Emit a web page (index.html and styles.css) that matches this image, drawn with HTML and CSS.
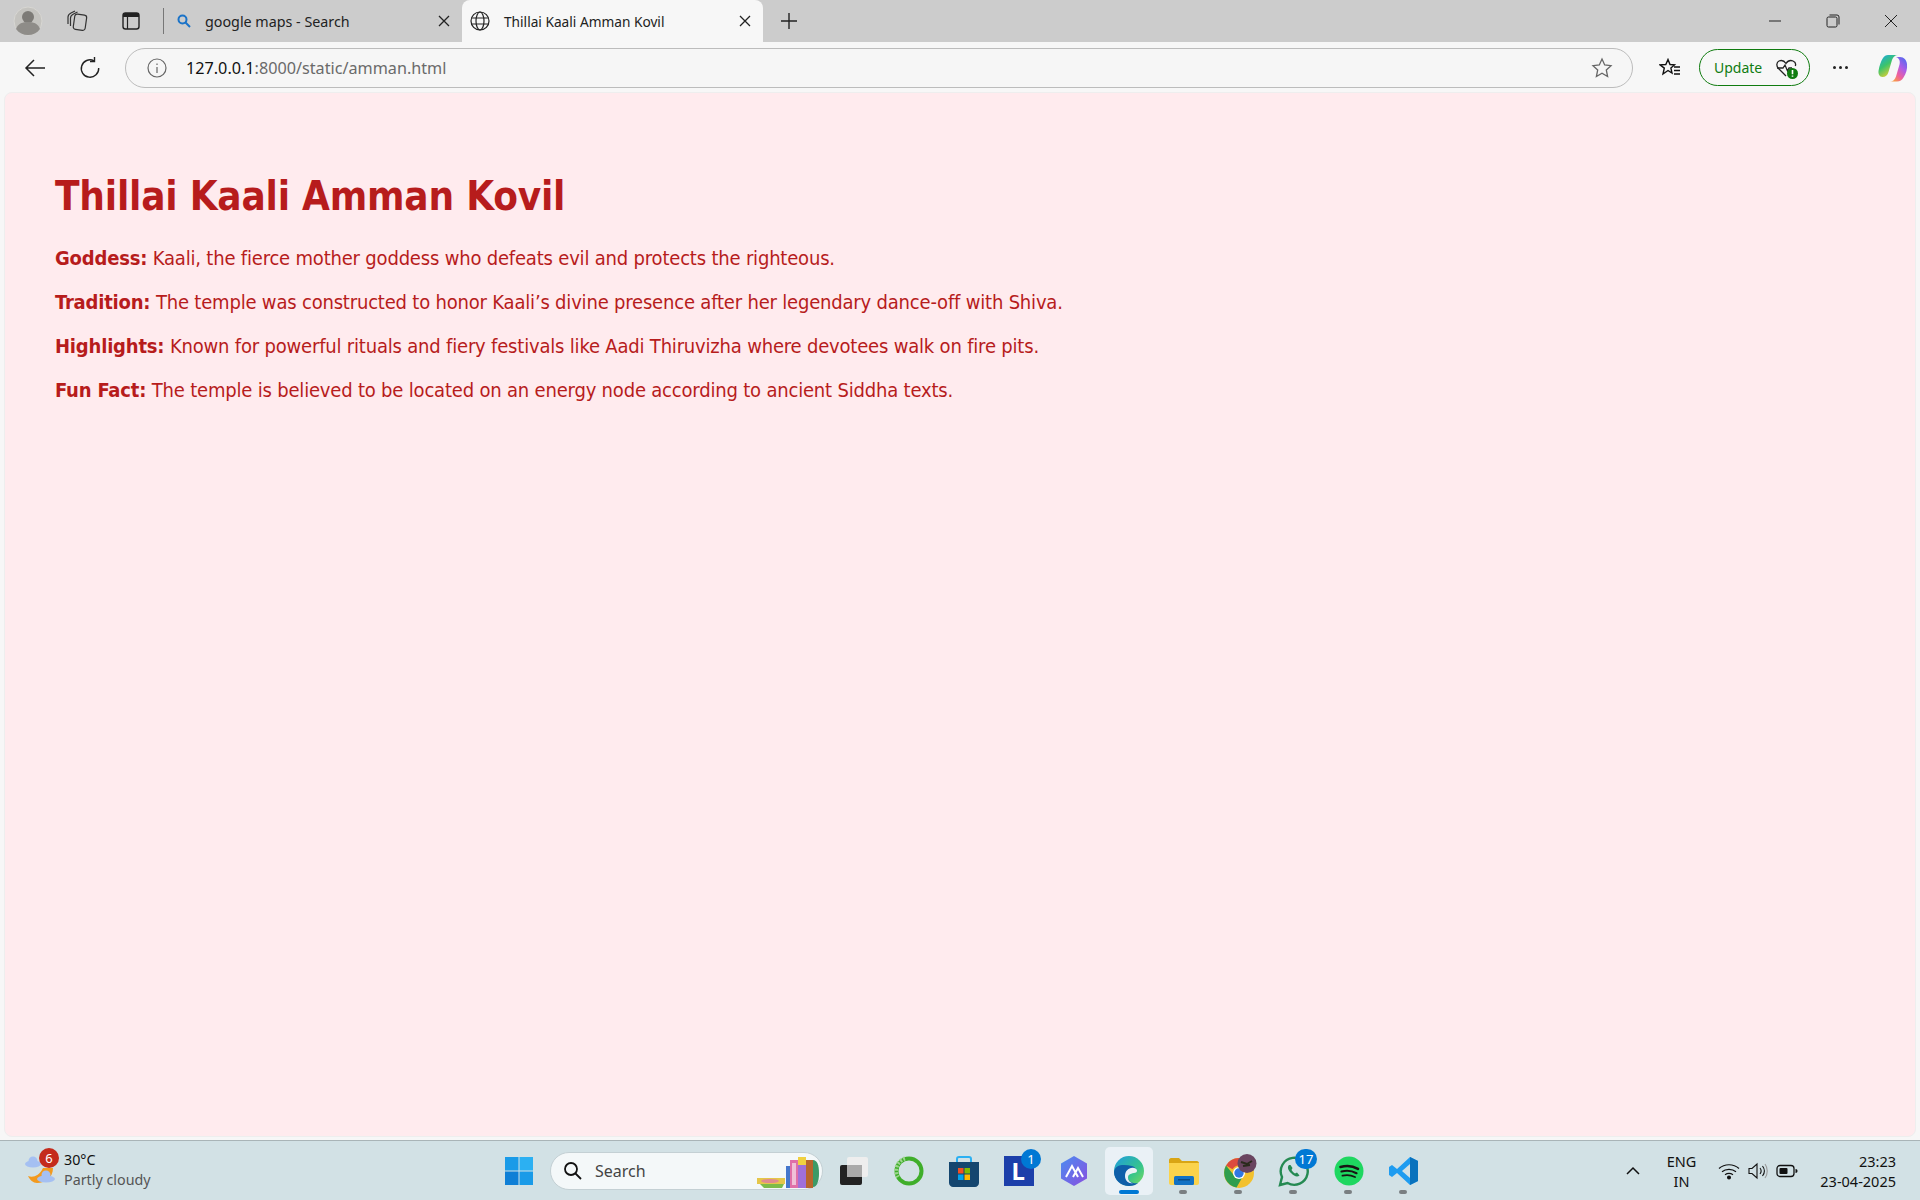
FILE: index.html
```html
<!DOCTYPE html>
<html lang="en">
<head>
    <meta charset="UTF-8">
    <meta name="viewport" content="width=device-width, initial-scale=1.0">
    <title>Thillai Kaali Amman Kovil</title>
    <link rel="stylesheet" href="styles.css">
</head>
<body>

<div class="tabstrip">
    <div class="strip-left">
        <div class="avatar">
            <svg width="42" height="42" viewBox="0 0 42 42"><circle cx="21" cy="21" r="14" fill="#c4c3bf" stroke="#d8d7d3" stroke-width="1"/><circle cx="21" cy="17" r="6" fill="#7d7b77"/><path d="M9 29c2-6 7-7 12-7s10 1 12 7c-3 4-7 6-12 6s-9-2-12-6z" fill="#8e8c88"/></svg>
        </div>
        <div class="strip-btn">
            <svg width="22" height="22" viewBox="0 0 22 22" fill="none" stroke="#333" stroke-width="1.2"><path d="M2 14V7c0-2 1-3 3-4l4-2"/><path d="M4.500 16V8c0-2 1-3 3-4l4-2"/><rect x="8" y="4.500" width="12" height="15.500" rx="2.500" transform="rotate(8 14 12)"/></svg>
        </div>
        <div class="strip-btn">
            <svg width="20" height="20" viewBox="0 0 20 20"><rect x="2" y="2" width="16" height="16" rx="2.500" fill="none" stroke="#222" stroke-width="1.400"/><path d="M2 4.500a2.500 2.500 0 0 1 2.500-2.500h11a2.500 2.500 0 0 1 2.500 2.500V6H2z" fill="#222"/><path d="M6.500 6v12" stroke="#222" stroke-width="1.200"/></svg>
        </div>
        <div class="strip-sep"></div>
    </div>
    <div class="tab">
        <svg width="16" height="16" viewBox="0 0 16 16" fill="none" stroke="#1a73c8" stroke-width="2"><circle cx="6.500" cy="6.500" r="4"/><path d="M9.500 9.500l4.500 4.500"/></svg>
        <span class="tab-title">google maps - Search</span>
        <svg class="tab-close" width="12" height="12" viewBox="0 0 12 12" stroke="#222" stroke-width="1.300"><path d="M1 1l10 10M11 1L1 11"/></svg>
    </div>
    <div class="tab tab-active">
        <svg width="22" height="22" viewBox="0 0 22 22" fill="none" stroke="#222" stroke-width="1.200"><circle cx="11" cy="11" r="9"/><ellipse cx="11" cy="11" rx="4" ry="9"/><path d="M2.500 8h17M2.500 14h17"/></svg>
        <span class="tab-title">Thillai Kaali Amman Kovil</span>
        <svg class="tab-close" width="12" height="12" viewBox="0 0 12 12" stroke="#222" stroke-width="1.300"><path d="M1 1l10 10M11 1L1 11"/></svg>
    </div>
    <div class="new-tab">
        <svg width="18" height="18" viewBox="0 0 18 18" stroke="#222" stroke-width="1.400"><path d="M9 1v16M1 9h16"/></svg>
    </div>
    <div class="win-controls">
        <svg width="14" height="14" viewBox="0 0 14 14" stroke="#222" stroke-width="1"><path d="M1 7h12"/></svg>
        <svg width="14" height="14" viewBox="0 0 14 14" fill="none" stroke="#222" stroke-width="1"><rect x="1" y="3" width="10" height="10" rx="1.500"/><path d="M3.500 1h7.500a2 2 0 0 1 2 2v7.500"/></svg>
        <svg width="14" height="14" viewBox="0 0 14 14" stroke="#222" stroke-width="1"><path d="M1 1l12 12M13 1L1 13"/></svg>
    </div>
</div>

<div class="toolbar">
    <div class="tool-btn">
        <svg width="22" height="20" viewBox="0 0 22 20" fill="none" stroke="#222" stroke-width="1.500"><path d="M21 10H2M10 2l-8 8 8 8"/></svg>
    </div>
    <div class="tool-btn">
        <svg width="22" height="22" viewBox="0 0 22 22" fill="none" stroke="#222" stroke-width="1.400"><path d="M15 3.800A8.700 8.700 0 1 0 19.700 11"/><path d="M15.500 0v4.500H11"/></svg>
    </div>
    <div class="address">
        <svg width="20" height="20" viewBox="0 0 20 20" fill="none" stroke="#666" stroke-width="1.200"><circle cx="10" cy="10" r="9"/><path d="M10 9v6M10 5.500v1.500"/></svg>
        <span class="url"><span class="url-host">127.0.0.1</span>:8000/static/amman.html</span>
        <svg class="star" width="22" height="22" viewBox="0 0 22 22" fill="none" stroke="#666" stroke-width="1.300"><path d="M11 2l2.700 6 6.300.7-4.700 4.300 1.300 6.500-5.600-3.300-5.600 3.300 1.300-6.500L2 8.700 8.300 8z"/></svg>
    </div>
    <div class="tool-btn fav-btn">
        <svg width="22" height="20" viewBox="0 0 22 20" fill="none" stroke="#111" stroke-width="1.400"><path d="M9 1.500l2 5 4.500.4-3.600 3.200 1.100 5-4-2.600-5 3.500 1.300-5.900L1 6.900 6.800 6.500z"/><path d="M15 9h6M15 12.500h6M15 16h6"/></svg>
    </div>
    <div class="update-pill">
        <span>Update</span>
        <svg width="24" height="24" viewBox="0 0 24 24" fill="none"><path d="M11 20L3.500 12.500C1 10 1.500 6 4 5c3-1.200 5.500.2 7 2.500C12.500 5.200 15 3.800 18 5c2 .8 3 3 2.300 5" stroke="#222" stroke-width="1.300"/><path d="M2 12h6l2-3 2.500 6 1.500-3h3" stroke="#222" stroke-width="1.300"/><circle cx="17.500" cy="17.500" r="5.500" fill="#107c10"/><path d="M17.500 14v4.200M17.500 19.500v1.200" stroke="#fff" stroke-width="1.600"/></svg>
    </div>
    <div class="tool-btn dots">
        <span></span><span></span><span></span>
    </div>
    <div class="copilot">
        <svg width="30" height="30" viewBox="0 0 30 30"><defs><linearGradient id="copA" x1="0" y1="0" x2=".6" y2="1"><stop offset="0" stop-color="#19a7ee"/><stop offset=".5" stop-color="#3cc46a"/><stop offset="1" stop-color="#f5d02c"/></linearGradient><linearGradient id="copB" x1="1" y1="0" x2=".3" y2="1"><stop offset="0" stop-color="#3f6cf0"/><stop offset=".45" stop-color="#b05ce6"/><stop offset=".75" stop-color="#f0609a"/><stop offset="1" stop-color="#f79a4a"/></linearGradient></defs><path d="M22 4c4 0 6.500 3 7 7 .6 5-1 10-3.500 13.500C24 27 22 28.500 19 28.500h-7c3 0 5-2 6-5l3.500-12C22.500 8 21 5 18 4z" fill="url(#copB)"/><path d="M10 2h10c-3 0-5 2-6 5l-3.500 12c-1 3.500-3 5-6 5C1.500 24 0 21 .6 17.500 1.300 13 3 8 5 5c1.300-2 3-3 5-3z" fill="url(#copA)"/></svg>
    </div>
</div>

<div class="viewport">
    <main class="page">
        <h1>Thillai Kaali Amman Kovil</h1>
        <p><strong>Goddess:</strong> Kaali, the fierce mother goddess who defeats evil and protects the righteous.</p>
        <p><strong>Tradition:</strong> The temple was constructed to honor Kaali’s divine presence after her legendary dance-off with Shiva.</p>
        <p><strong>Highlights:</strong> Known for powerful rituals and fiery festivals like Aadi Thiruvizha where devotees walk on fire pits.</p>
        <p><strong>Fun Fact:</strong> The temple is believed to be located on an energy node according to ancient Siddha texts.</p>
    </main>
</div>

<footer class="taskbar">
    <div class="weather">
        <div class="weather-icon">
            <svg width="32" height="34" viewBox="0 0 32 34"><path d="M3 22c5 2 11 0 15-8h10c0 10-8 15-16 15-4 0-7-3-9-7z" fill="#f39a1e"/><ellipse cx="8" cy="10" rx="8" ry="3.500" fill="#a5c0f2"/><circle cx="8" cy="7" r="4.500" fill="#a5c0f2"/><ellipse cx="21" cy="25" rx="9" ry="3.500" fill="#a5c0f2"/><circle cx="21" cy="21" r="4.500" fill="#a5c0f2"/></svg>
            <span class="weather-badge">6</span>
        </div>
        <div class="weather-text">
            <span class="temp">30°C</span>
            <span class="cond">Partly cloudy</span>
        </div>
    </div>

    <div class="task-center">
        <div class="task-icon">
            <svg width="30" height="30" viewBox="0 0 30 30"><path d="M1 1h13.500v13.500H1z" fill="#1a9be8"/><path d="M15.500 1H29v13.500H15.500z" fill="#2cb0f2"/><path d="M1 15.500h13.500V29H1z" fill="#0f7fd6"/><path d="M15.500 15.500H29V29H15.500z" fill="#1a9be8"/></svg>
        </div>
        <div class="task-search">
            <svg width="20" height="20" viewBox="0 0 20 20" fill="none" stroke="#111" stroke-width="1.800"><circle cx="8" cy="8" r="6"/><path d="M12.500 12.500L18 18"/></svg>
            <span>Search</span>
            <svg class="books" width="66" height="36" viewBox="0 0 66 36"><path d="M2 25h28v6H2z" fill="#e5c64a"/><ellipse cx="15" cy="28" rx="9" ry="2" fill="#e08a90"/><path d="M5 31h24l-2 4H9z" fill="#7dbb4a"/><rect x="31" y="13" width="4" height="22" fill="#4477cc"/><rect x="35" y="7" width="8" height="28" fill="#e06fa8"/><rect x="37" y="10" width="4" height="22" fill="#f0c0d8"/><rect x="43" y="4" width="8" height="31" fill="#a06fd8"/><rect x="43" y="4" width="8" height="8" fill="#f0d040"/><rect x="51" y="7" width="7" height="28" fill="#b8652c"/><path d="M58 7c4 0 6 5 6 13s-2 14-6 14z" fill="#3d9a66"/></svg>
        </div>
        <div class="task-icon">
            <svg width="30" height="30" viewBox="0 0 30 30"><rect x="1" y="9" width="22" height="20" rx="2" fill="#222"/><rect x="8" y="1" width="21" height="20" rx="2" fill="#eee"/><rect x="8" y="9" width="15" height="12" fill="#aaa"/></svg>
        </div>
        <div class="task-icon">
            <svg width="32" height="32" viewBox="0 0 32 32" fill="none"><circle cx="16" cy="16" r="12.500" stroke="#3fae2a" stroke-width="4"/><path d="M12 3.500A12.500 12.500 0 0 0 5 22" stroke="#9ed48f" stroke-width="4" stroke-dasharray="2 1.500"/></svg>
        </div>
        <div class="task-icon">
            <svg width="30" height="32" viewBox="0 0 30 32"><path d="M8 8V4c0-1 1-2 2-2h10c1 0 2 1 2 2v4" fill="none" stroke="#2cb0f2" stroke-width="2"/><path d="M0 7h30v21c0 2-2 4-4 4H4c-2 0-4-2-4-4z" fill="#14466f"/><rect x="9" y="13" width="5.500" height="5.500" fill="#f25022"/><rect x="15.500" y="13" width="5.500" height="5.500" fill="#7fba00"/><rect x="9" y="19.500" width="5.500" height="5.500" fill="#00a4ef"/><rect x="15.500" y="19.500" width="5.500" height="5.500" fill="#ffb900"/></svg>
        </div>
        <div class="task-icon">
            <div class="l-tile">L</div>
            <span class="task-badge">1</span>
        </div>
        <div class="task-icon">
            <svg width="30" height="32" viewBox="0 0 30 32"><defs><linearGradient id="lensG" x1="0" y1="0" x2="1" y2="1"><stop offset="0" stop-color="#4a8cf0"/><stop offset="1" stop-color="#8a4fe0"/></linearGradient></defs><path d="M15 1l13 7.500v15L15 31 2 23.500v-15z" fill="url(#lensG)"/><path d="M7 22l6-11 6 11M14 22l5-9 5 9" fill="none" stroke="#fff" stroke-width="2"/></svg>
        </div>
        <div class="task-icon task-active">
            <svg width="32" height="32" viewBox="0 0 32 32"><defs><linearGradient id="edgeG" x1="0" y1="0" x2="1" y2="1"><stop offset="0" stop-color="#1f9be0"/><stop offset=".6" stop-color="#35c48d"/><stop offset="1" stop-color="#7ddc5b"/></linearGradient></defs><circle cx="16" cy="16" r="15" fill="url(#edgeG)"/><path d="M1 17c0 8 7 14 15 14 4 0 7-1 9-3-5 1-10-1-10-6 0-3 3-5 6-5 3-1 2-5-2-6C11 9 2 9 1 17z" fill="#0f5fa9"/><path d="M12 21c0-5 4-9 9-8 3 .6 4 3 2 4.500-2 1-8 .5-8 5 0 3 2 5 5 6-5 0-8-3-8-7.500z" fill="#eaf1f6"/></svg>
            <span class="active-bar"></span>
        </div>
        <div class="task-icon">
            <svg width="32" height="28" viewBox="0 0 32 28"><path d="M1 3c0-1 1-2 2-2h8l3 3h15c1 0 2 1 2 2v3H1z" fill="#d9a514"/><path d="M1 6h30v20c0 1-1 2-2 2H3c-1 0-2-1-2-2z" fill="#fbd34b"/><rect x="6" y="19" width="20" height="9" rx="1.500" fill="#1272c4"/><rect x="10" y="22" width="12" height="1.500" fill="#0b4c86"/></svg>
            <span class="run-dot"></span>
        </div>
        <div class="task-icon">
            <svg width="36" height="34" viewBox="-3 0 36 34"><circle cx="15" cy="19" r="15" fill="#f2c12e"/><path d="M15 4a15 15 0 0 1 13 7.500H15a7.500 7.500 0 0 0-6.500 3.800L2 11.500A15 15 0 0 1 15 4z" fill="#dd4b3e"/><path d="M2 11.500a15 15 0 0 0 10.500 22l6-10.500a7.500 7.500 0 0 1-10-3.500z" fill="#2f9e4f"/><circle cx="15" cy="19" r="6" fill="#fff"/><circle cx="15" cy="19" r="4.700" fill="#2f78e4"/><circle cx="23" cy="9.500" r="9.500" fill="#6a4560"/><path d="M17 8l6 2 5-3M19 12l7-1" stroke="#2a2a1c" stroke-width="2" fill="none"/></svg>
            <span class="run-dot"></span>
        </div>
        <div class="task-icon">
            <svg width="32" height="32" viewBox="0 0 32 32" fill="none"><path d="M2 30l2-8A13.500 13.500 0 1 1 9.500 28z" stroke="#258a52" stroke-width="2.400"/><path d="M11 10c-2 2-1 5 2 8s6 4.500 8.500 2.500l-2.500-3-2 1c-1.500-.8-2.500-2-3.500-3.500l1-2-2-3z" fill="#258a52"/></svg>
            <span class="task-badge task-badge-wide">17</span>
            <span class="run-dot"></span>
        </div>
        <div class="task-icon">
            <svg width="30" height="30" viewBox="0 0 30 30" fill="none"><circle cx="15" cy="15" r="14.500" fill="#1ed760"/><path d="M6.500 11c6-1.700 12.500-1 17.500 1.800" stroke="#191414" stroke-width="2.600" stroke-linecap="round"/><path d="M7.500 15.500c5-1.300 10.500-.8 15 1.700" stroke="#191414" stroke-width="2.200" stroke-linecap="round"/><path d="M8.500 19.700c4.200-1 8.500-.6 12.500 1.300" stroke="#191414" stroke-width="1.800" stroke-linecap="round"/></svg>
            <span class="run-dot"></span>
        </div>
        <div class="task-icon">
            <svg width="30" height="30" viewBox="0 0 30 30"><path d="M21 1l8 4v20l-8 4L8 17l-5 4-3-2v-8l3-2 5 4z" fill="#1f9cf0"/><path d="M21 1l8 4v20l-8 4z" fill="#0a72bd"/><path d="M21 8l-8 7 8 7z" fill="#d2e1e5"/></svg>
            <span class="run-dot"></span>
        </div>
    </div>

    <div class="tray">
        <svg class="tray-up" width="14" height="10" viewBox="0 0 14 10" fill="none" stroke="#111" stroke-width="1.500"><path d="M1 8l6-6 6 6"/></svg>
        <div class="lang"><span>ENG</span><span>IN</span></div>
        <div class="tray-icons">
            <svg width="22" height="18" viewBox="0 0 22 18" fill="none" stroke="#111" stroke-width="1.200"><path d="M1 6.500c5.500-5 14.500-5 20 0M4 9.700c3.800-3.200 10.200-3.200 14 0M7 12.700c2.300-1.500 5.700-1.500 8 0"/><circle cx="11" cy="15.500" r="1.400" fill="#111"/></svg>
            <svg width="20" height="18" viewBox="0 0 20 18" fill="none" stroke="#111" stroke-width="1.100"><path d="M1 6.500h3L9 2v14l-5-4.500H1z"/><path d="M12 6c1.300 1.700 1.300 4.300 0 6M14.500 4c2.300 3 2.300 7 0 10"/><path d="M17 2c3 4 3 10 0 14" stroke="#999"/></svg>
            <svg width="22" height="14" viewBox="0 0 22 14" fill="none"><rect x="1" y="1.500" width="17" height="11" rx="3" stroke="#111" stroke-width="1.300"/><rect x="3.500" y="4" width="8" height="6" rx="1" fill="#111"/><path d="M19.500 5v4c1.300 0 2-.8 2-2s-.7-2-2-2z" fill="#111"/></svg>
        </div>
        <div class="clock"><span>23:23</span><span>23-04-2025</span></div>
    </div>
</footer>

</body>
</html>
```

FILE: styles.css
```css
* {
    box-sizing: border-box;
}
html, body {
    height: 100%;
}
body {
    margin: 0;
    display: flex;
    flex-direction: column;
    height: 1200px;
    overflow: hidden;
    background-color: #f7f7f7;
    font-family: "Noto Sans", sans-serif;
}
svg {
    display: block;
    flex-shrink: 0;
}

/* browser chrome */
.tabstrip {
    display: flex;
    align-items: stretch;
    height: 42px;
    background-color: #cccccc;
}
.strip-left {
    display: flex;
    align-items: center;
    width: 164px;
    padding-left: 7px;
}
.strip-btn {
    display: flex;
    justify-content: center;
    width: 53px;
    margin-left: 1px;
}
.strip-sep {
    width: 1px;
    height: 26px;
    margin-left: 6px;
    background-color: #777;
}
.tab {
    display: flex;
    align-items: center;
    gap: 13px;
    width: 298px;
    padding: 0 10px 0 12px;
    font-size: 14.300px;
    color: #222;
}
.tab-title {
    flex: 1;
    white-space: nowrap;
}
.tab-active {
    width: 301px;
    gap: 13px;
    padding-left: 7px;
    background-color: #f7f7f7;
    border-radius: 8px 8px 0 0;
    font-size: 13.700px;
}
.tab-close {
    margin-right: 2px;
}
.new-tab {
    display: flex;
    align-items: center;
    padding-left: 17px;
}
.win-controls {
    display: flex;
    align-items: center;
    gap: 44px;
    margin-left: auto;
    padding-right: 22px;
}
.toolbar {
    display: flex;
    align-items: center;
    height: 50px;
    padding-top: 1px;
}
.tool-btn {
    display: flex;
    justify-content: center;
    align-items: center;
    width: 55px;
}
.toolbar > .tool-btn:first-child {
    margin-left: 7px;
}
.address {
    display: flex;
    align-items: center;
    width: 1508px;
    height: 40px;
    margin-left: 8px;
    padding: 0 19px 0 21px;
    background-color: #f6f6f6;
    border: 1px solid #bcbcbc;
    border-radius: 20px;
    font-size: 16.200px;
    color: #6a6a6a;
}
.url {
    flex: 1;
    padding-left: 19px;
}
.url-host {
    color: #111;
}
.fav-btn {
    margin-left: 9px;
    width: 56px;
}
.update-pill {
    display: flex;
    align-items: center;
    justify-content: space-between;
    width: 111px;
    height: 37px;
    margin-left: 1px;
    padding: 0 10px 0 14px;
    border: 1.500px solid #107c10;
    border-radius: 19px;
    font-size: 14px;
    color: #107c10;
}
.dots {
    gap: 3px;
    width: 60px;
}
.dots span {
    width: 3px;
    height: 3px;
    border-radius: 50%;
    background-color: #222;
}
.copilot {
    margin-left: 8px;
}

/* the page itself */
.viewport {
    flex: 1;
    padding: 0 4px 3px;
}
.page {
    height: 100%;
    padding: 40px 50px;
    background-color: #ffebee;
    border: 1px solid #eeeeee;
    border-radius: 8px;
    color: #b71c1c;
    font-family: "DejaVu Sans Condensed", sans-serif;
}
h1 {
    margin: 39px 0 24px;
    font-size: 40px;
    line-height: 48px;
    letter-spacing: -0.2px;
}
p {
    margin: 0 0 16px;
    font-size: 20px;
    line-height: 28px;
    letter-spacing: -0.19px;
}

/* windows taskbar */
.taskbar {
    display: grid;
    grid-template-columns: 491px auto 1fr;
    align-items: center;
    height: 60px;
    background-color: #d2e1e5;
    border-top: 1px solid #a9b4b7;
}
.weather {
    display: flex;
    align-items: center;
    gap: 7px;
    padding-left: 25px;
}
.weather-icon {
    position: relative;
}
.weather-badge {
    position: absolute;
    top: -6px;
    left: 14px;
    width: 20px;
    height: 20px;
    border-radius: 50%;
    background-color: #c42b1c;
    color: #fff;
    font-size: 13px;
    line-height: 20px;
    text-align: center;
}
.weather-text {
    display: flex;
    flex-direction: column;
    margin-top: -2px;
    font-size: 14.300px;
    line-height: 20px;
    color: #111;
}
.cond {
    color: #555;
}
.task-center {
    display: flex;
    align-items: center;
}
.task-icon {
    position: relative;
    display: flex;
    align-items: center;
    justify-content: center;
    width: 55px;
    height: 48px;
}
.task-search {
    display: flex;
    align-items: center;
    gap: 12px;
    width: 273px;
    height: 38px;
    margin: 0 3px 0 4px;
    padding-left: 12px;
    background-color: #f4f8f9;
    border: 1px solid #c4d0d4;
    border-radius: 19px;
    font-size: 16px;
    color: #444;
}
.books {
    margin-left: auto;
    margin-right: 1px;
}
.task-search span {
    flex: 0 0 auto;
}
.l-tile {
    width: 30px;
    height: 30px;
    padding-left: 8px;
    background-color: #1c3faa;
    color: #fff;
    font-size: 24px;
    font-weight: 700;
    line-height: 30px;
}
.task-badge {
    position: absolute;
    top: 2px;
    right: 5px;
    min-width: 20px;
    height: 20px;
    border-radius: 10px;
    background-color: #0078d4;
    color: #fff;
    font-size: 13px;
    line-height: 20px;
    text-align: center;
}
.task-badge-wide {
    right: 4px;
    min-width: 22px;
}
.task-active {
    width: 48px;
    margin: 0 3.500px;
    background-color: #eaf1f6;
    border-radius: 5px;
}
.active-bar {
    position: absolute;
    bottom: 1px;
    left: 14px;
    width: 20px;
    height: 4px;
    border-radius: 2px;
    background-color: #0078d4;
}
.run-dot {
    position: absolute;
    bottom: 1px;
    left: 23px;
    width: 8px;
    height: 4px;
    border-radius: 2px;
    background-color: #7a7f82;
}
.tray {
    display: flex;
    align-items: center;
    justify-content: flex-end;
    padding-right: 24px;
    font-size: 14.500px;
    line-height: 20px;
    color: #111;
}
.tray-up {
    margin-right: 27px;
}
.lang {
    display: flex;
    flex-direction: column;
    align-items: center;
    margin-right: 22px;
}
.tray-icons {
    display: flex;
    align-items: center;
    gap: 8px;
    margin-right: 22px;
}
.clock {
    display: flex;
    flex-direction: column;
    align-items: flex-end;
}
```
